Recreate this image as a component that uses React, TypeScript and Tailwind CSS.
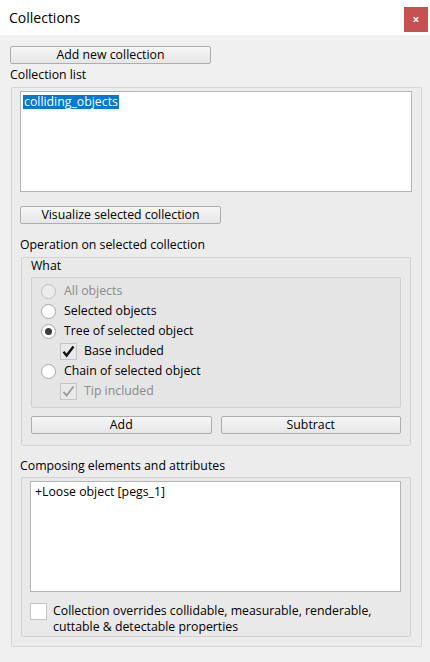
const font = { fontFamily: '"Open Sans", "Noto Sans", sans-serif' };

function Button({ label, className }: { label: string; className: string }) {
  return (
    <div
      className={`flex h-[18px] items-center justify-center rounded-[2px] border border-[#adadad] bg-gradient-to-b from-[#f6f6f6] to-[#e6e6e6] text-[12.3px] text-black ${className}`}
    >
      {label}
    </div>
  );
}

function Radio({ label, checked, disabled }: { label: string; checked?: boolean; disabled?: boolean }) {
  return (
    <div className="flex h-[20px] items-center pl-[9px]">
      <div
        className={`flex h-[15px] w-[15px] items-center justify-center rounded-full border ${
          disabled ? "border-[#c0c0c0] bg-[#ececec]" : "border-[#a6a6a6] bg-white"
        }`}
      >
        {checked && <div className="h-[7px] w-[7px] rounded-full bg-[#3c3c3c]" />}
      </div>
      <span className={`ml-[8px] text-[12.3px] ${disabled ? "text-[#8a8a8a]" : "text-black"}`}>{label}</span>
    </div>
  );
}

function Check({ label, checked, disabled }: { label: string; checked?: boolean; disabled?: boolean }) {
  return (
    <div className="flex h-[20px] items-center pl-[28px]">
      <div className="flex h-[17px] w-[17px] items-center justify-center border border-[#c4c4c4] bg-[#e9e9e9]">
        {checked && (
          <svg width="13" height="13" viewBox="0 0 13 13">
            <path
              d="M1.5 6.8 L4.6 10.5 L11.5 1.5"
              fill="none"
              stroke={disabled ? "#9a9a9a" : "#111"}
              strokeWidth={disabled ? 1.8 : 2.4}
            />
          </svg>
        )}
      </div>
      <span className={`ml-[7px] text-[12.3px] ${disabled ? "text-[#8a8a8a]" : "text-black"}`}>{label}</span>
    </div>
  );
}

export default function App() {
  return (
    <div className="h-[662px] w-[430px] overflow-hidden bg-[#f0f0f0] text-black" style={font}>
      <div className="flex h-[35px] items-start justify-between bg-white">
        <span className="ml-[9px] mt-[8px] text-[14px] leading-[20px]">Collections</span>
        <div className="mr-[2px] mt-[7px] flex h-[25px] w-[24px] items-center justify-center bg-[#c75050] text-[12px] font-bold leading-none text-white">
          ×
        </div>
      </div>

      <div className="flex flex-col pt-[11px]">
        <Button label="Add new collection" className="ml-[10px] w-[201px]" />
        <div className="ml-[10px] mt-[3px] h-[16px] text-[12.3px] leading-[16px]">Collection list</div>

        <div className="ml-[11px] mt-[4px] flex h-[560px] w-[411px] flex-col rounded-[2px] border border-[#d6d6d6] bg-[#ececec] px-[8px] pt-[3px]">
          <div className="h-[101px] w-[392px] border border-[#b4b4b4] bg-white px-[2px] pt-[3px]">
            <span className="block w-fit bg-[#0078d7] px-[1px] text-[12.3px] leading-[14px] text-white">
              colliding_objects
            </span>
          </div>

          <Button label="Visualize selected collection" className="mt-[14px] w-[201px]" />

          <div className="mt-[13px] h-[16px] text-[12.3px] leading-[16px]">Operation on selected collection</div>

          <div className="ml-[1px] mt-[4px] flex h-[189px] w-[390px] flex-col rounded-[2px] border border-[#d3d3d3] bg-[#e9e9e9] px-[9px]">
            <div className="h-[19px] text-[12.3px] leading-[16px]">What</div>
            <div className="flex h-[131px] w-[370px] flex-col rounded-[2px] border border-[#d0d0d0] bg-[#e5e5e5] pt-[3px]">
              <Radio label="All objects" disabled />
              <Radio label="Selected objects" />
              <Radio label="Tree of selected object" checked />
              <Check label="Base included" checked />
              <Radio label="Chain of selected object" />
              <Check label="Tip included" checked disabled />
            </div>
            <div className="mt-[8px] flex gap-[9px]">
              <Button label="Add" className="w-[181px]" />
              <Button label="Subtract" className="w-[181px]" />
            </div>
          </div>

          <div className="mt-[12px] h-[16px] text-[12.3px] leading-[16px]">Composing elements and attributes</div>

          <div className="ml-[1px] mt-[3px] flex h-[160px] w-[390px] flex-col rounded-[2px] border border-[#d3d3d3] bg-[#e9e9e9] px-[8px] pt-[3px]">
            <div className="h-[111px] w-[371px] border border-[#b4b4b4] bg-white px-[4px] pt-[2px] text-[12.3px] leading-[16px]">
              +Loose object [pegs_1]
            </div>
            <div className="mt-[11px] flex items-start">
              <div className="h-[17px] w-[17px] shrink-0 border border-[#c4c4c4] bg-white" />
              <div className="ml-[6px] text-[12.3px] leading-[16px]">
                Collection overrides collidable, measurable, renderable,
                <br />
                cuttable &amp; detectable properties
              </div>
            </div>
          </div>
        </div>
      </div>
    </div>
  );
}
